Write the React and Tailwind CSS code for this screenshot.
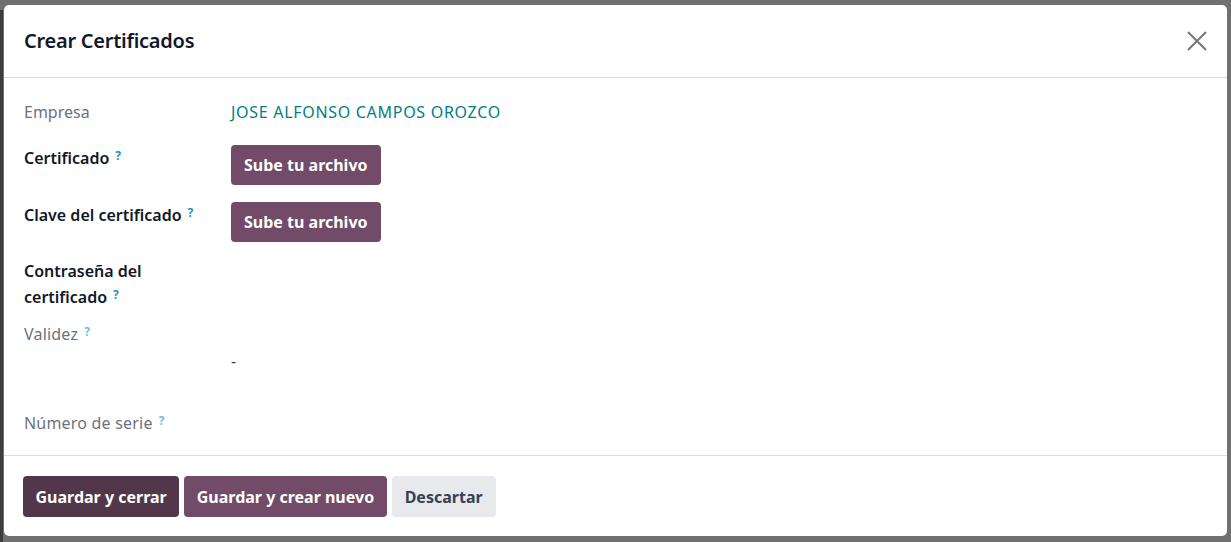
import React from "react";

function Q({ light }) {
  return (
    <sup
      className={`ml-[6px] text-[12px] leading-[10px] font-bold relative top-[-4px] ${light ? "text-[#6cbfd6]" : "text-[#1798b8]"}`}
    >
      ?
    </sup>
  );
}

function Btn({ children, className }) {
  return (
    <button
      className={`h-[40px] px-[13px] rounded-[4px] text-[16px] font-bold leading-none ${className}`}
    >
      {children}
    </button>
  );
}

export default function App() {
  return (
    <div
      className="w-[1231px] h-[542px] bg-[#707070] pt-[5px] pl-[4px] pr-[4px] pb-[6px] relative overflow-hidden"
      style={{ fontFamily: '"Noto Sans", "Open Sans", sans-serif' }}
    >
      <div className="absolute left-0 top-[10px] w-[3px] h-[532px] bg-[#3d3d3d]" />
      <div className="relative h-full bg-white rounded-[5px] flex flex-col">
        <div className="h-[73px] flex items-center justify-between pl-[20px] pr-[18px] border-b border-[#dcdcdc]">
          <h1 className="text-[20px] font-semibold text-[#111827] tracking-[-0.25px]">Crear Certificados</h1>
          <svg width="22" height="22" viewBox="0 0 22 22" className="mr-[1px]">
            <path d="M2 2 L20 20 M20 2 L2 20" stroke="#777" strokeWidth="2" />
          </svg>
        </div>
        <div className="flex-1 pl-[20px] pt-[21px] text-[16px] leading-[26px]">
          <div className="flex">
            <div className="w-[207px] text-[#6b7280]">Empresa</div>
            <div className="text-[#017e84] tracking-[0.7px]">JOSE ALFONSO CAMPOS OROZCO</div>
          </div>
          <div className="flex mt-[20px]">
            <div className="w-[207px] font-semibold text-[#111827]">Certificado<Q /></div>
            <Btn className="bg-[#714b67] text-white">Sube tu archivo</Btn>
          </div>
          <div className="flex mt-[17px]">
            <div className="w-[207px] font-semibold text-[#111827]">Clave del certificado<Q /></div>
            <Btn className="bg-[#714b67] text-white">Sube tu archivo</Btn>
          </div>
          <div className="flex mt-[16px]">
            <div className="w-[150px] font-semibold text-[#111827]">Contraseña del certificado<Q /></div>
          </div>
          <div className="flex mt-[11px]">
            <div className="w-[207px] text-[#6b7280] tracking-[0.2px]">Validez<Q light /></div>
          </div>
          <div className="flex">
            <div className="w-[207px]" />
            <div className="text-[#374151] mt-[1px]">-</div>
          </div>
          <div className="flex mt-[36px]">
            <div className="w-[207px] text-[#6b7280] tracking-[0.2px]">Número de serie<Q light /></div>
          </div>
        </div>
        <div className="h-[81px] border-t border-[#dcdcdc] flex items-start gap-[5px] pl-[19px] pt-[20px]">
          <button className="h-[41px] px-[12.5px] rounded-[4px] text-[16px] font-bold bg-[#52374b] text-white">Guardar y cerrar</button>
          <button className="h-[41px] px-[12.5px] rounded-[4px] text-[16px] font-bold bg-[#714b67] text-white">Guardar y crear nuevo</button>
          <button className="h-[41px] px-[13px] rounded-[4px] text-[16px] font-bold bg-[#e7e9ed] text-[#374151]">Descartar</button>
        </div>
      </div>
    </div>
  );
}
